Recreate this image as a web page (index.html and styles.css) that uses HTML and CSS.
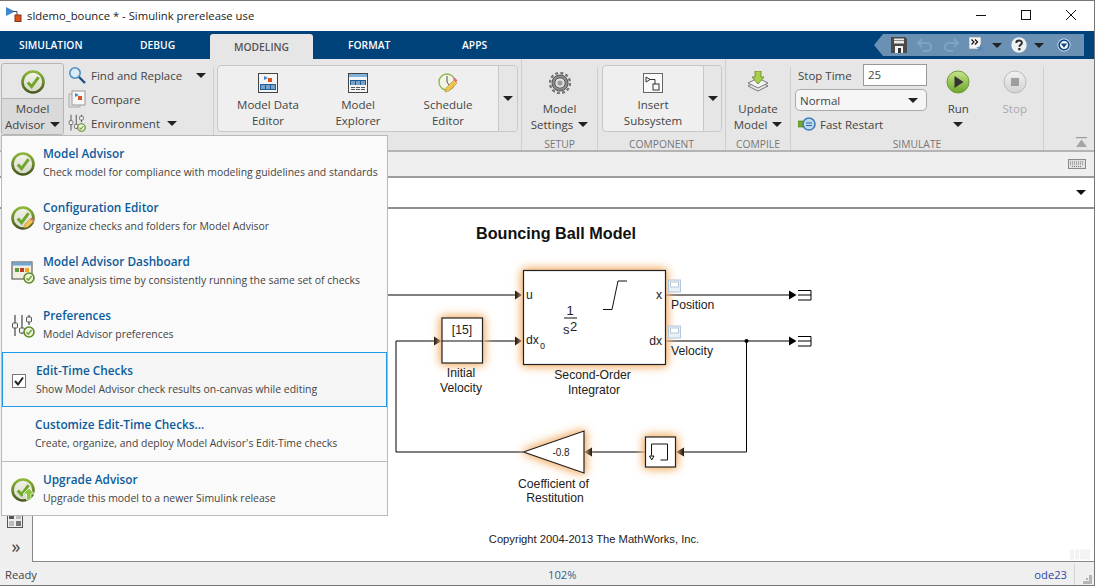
FILE: index.html
```html
<!DOCTYPE html>
<html lang="en">
<head>
<meta charset="utf-8">
<title>sldemo_bounce * - Simulink prerelease use</title>
<link rel="stylesheet" href="styles.css">
</head>
<body>
<svg class="defs" width="0" height="0" aria-hidden="true">
  <defs>
    <linearGradient id="ring" x1="0" y1="0" x2="0" y2="1"><stop offset="0" stop-color="#8db53a"/><stop offset="1" stop-color="#47591f"/></linearGradient>
    <linearGradient id="face" x1="0" y1="0" x2="0" y2="1"><stop offset="0" stop-color="#f4f4ea"/><stop offset="1" stop-color="#d5d9c8"/></linearGradient>
    <linearGradient id="runfill" x1="0" y1="0" x2="0" y2="1"><stop offset="0" stop-color="#c7e58a"/><stop offset="1" stop-color="#6ba52a"/></linearGradient>
    <linearGradient id="stopfill" x1="0" y1="0" x2="0" y2="1"><stop offset="0" stop-color="#f2f2f2"/><stop offset="1" stop-color="#d2d2d2"/></linearGradient>
    <symbol id="check" viewBox="0 0 24 24">
      <circle cx="12" cy="12" r="10.5" fill="url(#face)" stroke="url(#ring)" stroke-width="2.6"/>
      <path d="M6.800 12.400l3.800 4.200 7-9.400" fill="none" stroke="#6fa72c" stroke-width="3"/>
    </symbol>
    <symbol id="checkmini" viewBox="0 0 12 12">
      <circle cx="6" cy="6" r="5" fill="#eef2e2" stroke="#5f8a26" stroke-width="1.6"/>
      <path d="M3.400 6.200l1.900 2 3.300-4.200" fill="none" stroke="#6fa72c" stroke-width="1.5"/>
    </symbol>
    <symbol id="sliders" viewBox="0 0 24 24">
      <path d="M4 1v21M11 1v19M18 1v10" stroke="#555" stroke-width="1.3" fill="none"/>
      <rect x="1.500" y="9" width="5" height="5" rx="1" fill="#f2f2f2" stroke="#555"/>
      <rect x="8.500" y="14" width="5" height="5" rx="1" fill="#f2f2f2" stroke="#555"/>
      <rect x="15.500" y="3" width="5" height="5" rx="1" fill="#f2f2f2" stroke="#555"/>
      <use href="#checkmini" x="12" y="12" width="12" height="12"/>
    </symbol>
    <symbol id="pencil" viewBox="0 0 12 12">
      <path d="M1 11l1-4 6-6 3 3-6 6z" fill="#f2c24f" stroke="#b08a3a" stroke-width=".6"/>
      <path d="M7 2l3 3 1.400-1.500-3-3z" fill="#e0707a"/>
    </symbol>
  </defs>
</svg>
<div class="window">
  <header class="titlebar">
    <svg class="app-icon" viewBox="0 0 16 16"><path d="M0 0l9 4.500-9 4.500z" fill="#3f87c9"/><path d="M7 4.500h4v4" fill="none" stroke="#444"/><rect x="9" y="8" width="6" height="6.500" fill="#d9531e" stroke="#8a3512"/></svg>
    <span class="title-text">sldemo_bounce * - Simulink prerelease use</span>
    <div class="win-controls">
      <svg class="win-btn" viewBox="0 0 10 10"><path d="M0 5.500h10" stroke="#111"/></svg>
      <svg class="win-btn" viewBox="0 0 10 10"><rect x=".5" y=".5" width="9" height="9" fill="none" stroke="#111"/></svg>
      <svg class="win-btn" viewBox="0 0 10 10"><path d="M0 0l10 10M10 0L0 10" stroke="#111"/></svg>
    </div>
  </header>

  <nav class="tabbar">
    <span class="tab tab-sim">SIMULATION</span>
    <span class="tab tab-debug">DEBUG</span>
    <span class="tab tab-active">MODELING</span>
    <span class="tab tab-format">FORMAT</span>
    <span class="tab tab-apps">APPS</span>
    <div class="quick">
      <svg class="q-ico q-save" viewBox="0 0 16 16"><path d="M0 0h14l2 2v14H0z" fill="#4a4a4a"/><rect x="3" y="1.500" width="10" height="5" fill="#e8e8e8"/><rect x="3" y="3" width="10" height="1" fill="#8a8a8a"/><rect x="4" y="9" width="8" height="7" fill="#f4f4f4"/><rect x="7" y="11" width="3" height="5" fill="#333"/></svg>
      <svg class="q-ico q-undo" viewBox="0 0 16 16"><path d="M5 2L1 6l4 4M1 6h9a4 4 0 0 1 0 8H6" fill="none" stroke="#7fa3c4" stroke-width="2"/></svg>
      <svg class="q-ico q-redo" viewBox="0 0 16 16"><path d="M11 2l4 4-4 4M15 6H6a4 4 0 0 0 0 8h4" fill="none" stroke="#7fa3c4" stroke-width="2"/></svg>
      <svg class="q-ico q-fav" viewBox="0 0 16 16"><rect x="0" y="0" width="12" height="12" fill="#f3f3f3" stroke="#8a8a8a" stroke-width=".6"/><path d="M2.500 2.500l2.500 2.500-2.500 2.500M6 2.500l2.500 2.500-2.500 2.500" fill="none" stroke="#111" stroke-width="1.200"/><path d="M11.500 7l1.200 3h3l-2.400 2 1 3.200-2.800-1.800-2.800 1.800 1-3.200-2.400-2h3z" fill="#5b88b5"/></svg>
      <i class="arrow arrow-q1"></i>
      <svg class="q-ico q-help" viewBox="0 0 16 16"><circle cx="8" cy="8" r="7.700" fill="#eef1f4"/><path d="M5.300 6c0-3.400 5.600-3.400 5.600-.2 0 2-2.500 2-2.500 4" fill="none" stroke="#2f2f2f" stroke-width="2"/><rect x="7.200" y="11" width="2.300" height="2.300" fill="#2f2f2f"/></svg>
      <i class="arrow arrow-q2"></i>
      <svg class="q-ico q-min" viewBox="0 0 14 14"><circle cx="7" cy="7" r="6.500" fill="#f7f9fb"/><circle cx="7" cy="7" r="4.900" fill="none" stroke="#0d4a86" stroke-width="1.800"/><path d="M3.800 5.500h6.400L7 9.800z" fill="#0d4a86"/></svg>
    </div>
  </nav>

  <section class="ribbon">
    <div class="rg rg-file">
      <div class="advisor-btn">
        <div class="advisor-top"><svg class="i24"><use href="#check"/></svg></div>
        <div class="advisor-bottom"><span>Model</span><span>Advisor <i class="arrow arrow-inline"></i></span></div>
      </div>
      <ul class="small-list">
        <li><svg class="i18" viewBox="0 0 18 18"><circle cx="7" cy="7" r="5.200" fill="#dcebf7" stroke="#4f8fc4" stroke-width="1.600"/><path d="M11 11l6 6" stroke="#1c4f80" stroke-width="2.400"/></svg><span class="small-txt">Find and Replace</span><i class="arrow arrow-find"></i></li>
        <li><svg class="i18" viewBox="0 0 18 18"><rect x="1" y="4" width="11" height="13" fill="#e4e4e4" stroke="#aaa"/><rect x="4" y="1" width="13" height="14" fill="#f8f8f8" stroke="#999"/><path d="M7 3l4 2-4 2z" fill="#3f87c9"/><rect x="10" y="6" width="4" height="4" fill="#d9531e"/></svg><span class="small-txt">Compare</span></li>
        <li><svg class="i18" viewBox="0 0 24 24"><use href="#sliders"/></svg><span class="small-txt">Environment</span><i class="arrow arrow-env"></i></li>
      </ul>
    </div>

    <div class="rg rg-gallery">
      <div class="gallery gallery-model">
        <div class="gal-item gal-a">
          <svg class="i20" viewBox="0 0 20 20"><rect x=".5" y=".5" width="19" height="19" fill="#f5f5f5" stroke="#444"/><path d="M6 3l4 2-4 2z" fill="#3f87c9"/><rect x="10" y="5" width="4" height="4" fill="#d9531e"/><rect x="2" y="11" width="16" height="6" fill="#1d5f9a"/><path d="M3 13h14M3 15h14" stroke="#d8e6f2" stroke-dasharray="4 1"/></svg>
          <span>Model Data</span><span>Editor</span>
        </div>
        <div class="gal-item gal-b">
          <svg class="i20" viewBox="0 0 20 20"><rect x=".5" y=".5" width="19" height="19" fill="#f5f5f5" stroke="#444"/><rect x="1" y="1" width="18" height="3" fill="#7fb2dd"/><rect x="2" y="7" width="16" height="5" fill="#1d5f9a"/><path d="M3 9h14M3 11h14" stroke="#d8e6f2" stroke-dasharray="4 1"/><path d="M3 14.500h14M3 16.500h14" stroke="#555" stroke-dasharray="4 1"/></svg>
          <span>Model</span><span>Explorer</span>
        </div>
        <div class="gal-item gal-a">
          <svg class="i20" viewBox="0 0 20 20"><circle cx="9" cy="9" r="8" fill="#f2f5e6" stroke="#8fb74d" stroke-width="1.400"/><path d="M9 3v6l2 3" fill="none" stroke="#555"/><path d="M7 19l1-4 8-8 3 3-8 8z" fill="#f2c24f" stroke="#b08a3a" stroke-width=".6"/><path d="M15 6l3 3 1.500-1.500-3-3z" fill="#e0707a"/></svg>
          <span>Schedule</span><span>Editor</span>
        </div>
        <div class="gal-drop"><i class="arrow"></i></div>
      </div>
    </div>

    <div class="rg rg-setup">
      <div class="big-btn">
        <svg class="i22" viewBox="0 0 22 22"><circle cx="11" cy="11" r="8" fill="#8d8d8d" stroke="#555" stroke-width="1"/><circle cx="11" cy="11" r="10" fill="none" stroke="#777" stroke-width="2.400" stroke-dasharray="3 2.240"/><circle cx="11" cy="11" r="5.200" fill="#e0e0e0" stroke="#555"/><circle cx="11" cy="11" r="2.600" fill="#9a9a9a"/></svg>
        <span>Model</span><span>Settings <i class="arrow arrow-inline"></i></span>
      </div>
      <div class="rg-label">SETUP</div>
    </div>

    <div class="rg rg-component">
      <div class="gallery gallery-comp">
        <div class="gal-item gal-comp">
          <svg class="i20" viewBox="0 0 20 20"><rect x=".5" y=".5" width="19" height="19" fill="#fafafa" stroke="#666"/><path d="M3 4l4 2.500L3 9zM7 6.500h5V11" fill="none" stroke="#333"/><rect x="10" y="11" width="6" height="6" fill="none" stroke="#333"/></svg>
          <span>Insert</span><span>Subsystem</span>
        </div>
        <div class="gal-drop"><i class="arrow"></i></div>
      </div>
      <div class="rg-label">COMPONENT</div>
    </div>

    <div class="rg rg-compile">
      <div class="big-btn big-update">
        <svg class="i22" viewBox="0 0 22 22"><path d="M1 15l10-5 10 5-10 5z" fill="#e8e8e8" stroke="#777"/><path d="M1 12l10-5 10 5-10 5z" fill="#f3f3f3" stroke="#777"/><path d="M8 0h6v6h3l-6 7-6-7h3z" fill="#a9cf4f" stroke="#5d8220" stroke-width=".8"/></svg>
        <span>Update</span><span>Model <i class="arrow arrow-inline"></i></span>
      </div>
      <div class="rg-label">COMPILE</div>
    </div>

    <div class="rg rg-simulate">
      <div class="sim-body">
        <div class="sim-left">
          <div class="sim-row"><span class="stop-label">Stop Time</span><span class="stop-input">25</span></div>
          <div class="sim-select"><span>Normal</span><i class="arrow"></i></div>
          <div class="sim-fast">
            <svg class="i18" viewBox="0 0 18 18"><rect x="0" y="6" width="5" height="6" fill="#76a82c" stroke="#4c7a18" stroke-width=".6"/><circle cx="11" cy="9" r="6" fill="#bcd8ef" stroke="#3f7eb8" stroke-width="1.600"/><path d="M8 8h6M8 10.500h6" stroke="#2f6ca5"/></svg>
            <span>Fast Restart</span>
          </div>
        </div>
        <div class="sim-action sim-run">
          <svg class="i24" viewBox="0 0 24 24"><circle cx="12" cy="12" r="11" fill="url(#runfill)" stroke="#6f9a3a"/><path d="M8.500 6l9 6-9 6z" fill="#333"/></svg>
          <span>Run</span><i class="arrow arrow-run"></i>
        </div>
        <div class="sim-action sim-stop">
          <svg class="i24" viewBox="0 0 24 24"><circle cx="12" cy="12" r="11" fill="url(#stopfill)" stroke="#bbb"/><rect x="8" y="8" width="8" height="8" fill="#9e9e9e"/></svg>
          <span>Stop</span>
        </div>
      </div>
      <div class="rg-label">SIMULATE</div>
    </div>

    <div class="ribbon-end">
      <svg class="collapse" viewBox="0 0 11 11"><path d="M0 .5h11" stroke="#9a9a9a" stroke-width="1.400"/><path d="M5.500 2.500L11 10H0z" fill="#a5a5a5"/></svg>
    </div>
  </section>

  <div class="toolstrip">
    <svg class="keyboard" viewBox="0 0 18 10"><rect x=".5" y=".5" width="17" height="9" fill="#e0e0e0" stroke="#8a8a8a"/><path d="M2 3h14M2 5h14M4 7.500h10" stroke="#777" stroke-dasharray="1 1"/></svg>
  </div>
  <div class="address"><i class="arrow arrow-addr"></i></div>

  <main class="workspace">
    <aside class="palette">
      <svg class="pal-ico" viewBox="0 0 16 16"><rect x=".5" y=".5" width="15" height="15" fill="#eee" stroke="#555"/><rect x="2" y="2" width="5" height="5" fill="#555"/><rect x="9" y="2" width="5" height="5" fill="#bbb"/><rect x="2" y="9" width="5" height="5" fill="#bbb"/><rect x="9" y="9" width="5" height="5" fill="#777"/></svg>
      <span class="pal-more">»</span>
    </aside>
    <div class="canvas">
      <svg class="diagram" viewBox="33 210 1061 351">
        <text class="d-title" x="556" y="239">Bouncing Ball Model</text>

        <g class="wires">
          <path d="M388 295.500H516M665 295.500H790M665 341.500H790M482 341.500H516M746.500 341.500V452.500H684M645 452.500H592M523 452.500H396V341.500H435"/>
          <path class="term" d="M798 291H811V300.500H798M798 295.500H811M798 337H811V346.500H798M798 341.500H811"/>
        </g>
        <g class="arrows">
          <path d="M515 291l7 4.500-7 4.500zM515 337l7 4.500-7 4.500zM789 291l7.500 4.500-7.500 4.500zM789 337l7.500 4.500-7.500 4.500zM434 337l7.500 4.500-7.500 4.500zM684 448l-8 4.500 8 4.500zM592 448l-8 4.500 8 4.500z"/>
          <circle cx="746.500" cy="341.500" r="2"/>
        </g>

        <rect class="block" x="523.500" y="271" width="142" height="94"/>
        <text class="d-txt" x="526" y="299">u</text>
        <text class="d-txt" x="526" y="344">dx</text>
        <text class="d-sub" x="540" y="349">0</text>
        <text class="d-txt d-end" x="662" y="299">x</text>
        <text class="d-txt d-end" x="662" y="345">dx</text>
        <text class="d-big d-mid" x="570" y="315">1</text>
        <path class="thin" d="M564 318.500H577"/>
        <text class="d-big" x="563" y="334">s</text>
        <text class="d-big" x="570" y="331">2</text>
        <path class="thin" d="M603 310H612L618 281.500H627"/>

        <rect class="logmark" x="668.500" y="280.500" width="12" height="12"/>
        <rect class="logmark-in" x="670.500" y="282.500" width="8" height="5"/>
        <rect class="logmark" x="668.500" y="326.500" width="12" height="12"/>
        <rect class="logmark-in" x="670.500" y="328.500" width="8" height="5"/>
        <text class="d-txt" x="671" y="309">Position</text>
        <text class="d-txt" x="671" y="355">Velocity</text>

        <rect class="block" x="442" y="318.500" width="40.500" height="45"/>
        <path class="thin" d="M442 341.500H482"/>
        <text class="d-txt d-mid" x="462" y="334">[15]</text>
        <text class="d-txt d-mid" x="461" y="377">Initial</text>
        <text class="d-txt d-mid" x="461" y="392">Velocity</text>
        <text class="d-txt d-mid" x="592.500" y="379">Second-Order</text>
        <text class="d-txt d-mid" x="594" y="394">Integrator</text>

        <rect class="block" x="645.500" y="437.500" width="30" height="30"/>
        <path class="thin" d="M660.500 460.500H667.500V444.500H651.500V456"/>
        <path class="thin hollow" d="M649.500 456.500h4.500l-2.250 4z"/>

        <path class="block" d="M523.500 452.500L584 431.500V473.500Z"/>
        <text class="d-small d-mid" x="561" y="456">-0.8</text>
        <text class="d-txt d-mid" x="553.500" y="488">Coefficient of</text>
        <text class="d-txt d-mid" x="555" y="502">Restitution</text>
        <text class="d-copy d-mid" x="594" y="543">Copyright 2004-2013 The MathWorks, Inc.</text>

        <rect class="ghost" x="1070" y="550" width="4" height="10"/>
        <rect class="ghost" x="1075" y="550" width="4" height="10"/>
        <rect class="ghost" x="1080" y="550" width="10" height="10"/>
      </svg>
    </div>
  </main>

  <footer class="status">
    <span class="st-ready">Ready</span>
    <span class="st-zoom">102%</span>
    <span class="st-solver">ode23</span>
    <span class="st-grip">
      <svg class="grip" viewBox="0 0 9 9"><path d="M6 0h3v3H6zM3 3h2v2H3zM6 3h3v3H6zM0 6h3v3H0zM3 6h3v3H3zM6 6h3v3H6z" fill="#b5b5b5"/></svg>
    </span>
  </footer>

  <div class="popup">
    <div class="pop-item">
      <svg class="i24 pop-ico"><use href="#check"/></svg>
      <div><h3>Model Advisor</h3><p>Check model for compliance with modeling guidelines and standards</p></div>
    </div>
    <div class="pop-item">
      <svg class="i24 pop-ico" viewBox="0 0 24 24"><use href="#check"/><use href="#pencil" x="12" y="11" width="12" height="12"/></svg>
      <div><h3>Configuration Editor</h3><p>Organize checks and folders for Model Advisor</p></div>
    </div>
    <div class="pop-item">
      <svg class="i24 pop-ico" viewBox="0 0 24 24"><rect x="1" y="2" width="20" height="17" fill="#f2efe0" stroke="#444"/><rect x="1.500" y="2.500" width="19" height="3" fill="#6fa6d6"/><rect x="4" y="8" width="4" height="4" fill="#5f9a3c"/><rect x="9" y="8" width="4" height="4" fill="#c0392b"/><rect x="14" y="8" width="4" height="4" fill="#f0a81e"/><use href="#checkmini" x="12" y="12" width="12" height="12"/></svg>
      <div><h3>Model Advisor Dashboard</h3><p>Save analysis time by consistently running the same set of checks</p></div>
    </div>
    <div class="pop-item">
      <svg class="i24 pop-ico" viewBox="0 0 24 24"><use href="#sliders"/></svg>
      <div><h3>Preferences</h3><p>Model Advisor preferences</p></div>
    </div>
    <div class="pop-item pop-selected">
      <span class="pop-check"><svg viewBox="0 0 12 12"><path d="M2 6l3 3.500L10 2.500" fill="none" stroke="#222" stroke-width="2"/></svg></span>
      <div><h3>Edit-Time Checks</h3><p>Show Model Advisor check results on-canvas while editing</p></div>
    </div>
    <div class="pop-item pop-custom">
      <div><h3>Customize Edit-Time Checks...</h3><p>Create, organize, and deploy Model Advisor's Edit-Time checks</p></div>
    </div>
    <div class="pop-item">
      <svg class="i24 pop-ico" viewBox="0 0 24 24"><use href="#check"/><path d="M18 10l5.500 6H20v6h-4.500v-6H12z" fill="#8cc63f" stroke="#fff" stroke-width=".7"/></svg>
      <div><h3>Upgrade Advisor</h3><p>Upgrade this model to a newer Simulink release</p></div>
    </div>
  </div>
</div>
</body>
</html>
```
FILE: styles.css
```css
* { box-sizing: border-box; }
html, body { margin: 0; padding: 0; background: #fff; }
body { font-family: "Open Sans", "Noto Sans", "Liberation Sans", sans-serif; font-size: 11.500px; color: #444; overflow: hidden; }
.defs { position: absolute; }
.window { position: relative; width: 1095px; height: 586px; border-top: 1px solid #777; border-right: 1px solid #777; border-bottom: 1px solid #777; display: flex; flex-direction: column; overflow: hidden; }
i { font-style: normal; }
svg { display: block; flex: none; }
.i18 { width: 18px; height: 18px; }
.i20 { width: 20px; height: 20px; }
.i22 { width: 22px; height: 22px; }
.i24 { width: 24px; height: 24px; }

.arrow { display: inline-block; width: 0; height: 0; border-left: 5px solid transparent; border-right: 5px solid transparent; border-top: 5px solid #222; }

/* Title bar */
.titlebar { height: 30px; flex: none; background: #fff; display: flex; align-items: center; padding-left: 6px; }
.app-icon { width: 16px; height: 16px; margin-top: -2px; }
.title-text { margin-left: 5px; font-size: 11.300px; color: #222; margin-top: -2px; white-space: nowrap; }
.win-controls { margin-left: auto; display: flex; gap: 35px; padding-right: 18px; margin-top: -2px; }
.win-btn { width: 10px; height: 10px; }

/* Tabs */
.tabbar { height: 28px; flex: none; background: #00427a; display: flex; align-items: stretch; }
.tab { font-size: 10.300px; font-weight: 600; color: #fff; display: flex; align-items: center; margin-top: 3px; padding-bottom: 3px; white-space: nowrap; }
.tab-sim { width: 105px; padding-left: 19px; }
.tab-debug { width: 105px; padding-left: 35px; }
.tab-active { width: 103px; justify-content: center; background: #e6e6e6; color: #555; border-radius: 3px 3px 0 0; padding-bottom: 0; }
.tab-format { width: 112px; padding-left: 35px; }
.tab-apps { padding-left: 37px; }
.quick { margin-left: auto; margin-right: 10px; margin-top: 3px; margin-bottom: 3px; width: 210px; background: #6a90b4; clip-path: polygon(0 50%, 9px 0, 100% 0, 100% 100%, 9px 100%); display: flex; align-items: center; }
.q-ico { width: 16px; height: 16px; }
.q-save { margin-left: 17px; }
.q-undo { margin-left: 10px; }
.q-redo { margin-left: 10px; }
.q-fav { margin-left: 10px; }
.arrow-q1 { margin-left: 7px; }
.q-help { margin-left: 9px; }
.arrow-q2 { margin-left: 7px; }
.q-min { width: 14px; height: 14px; margin-left: 13px; }

/* Ribbon */
.ribbon { height: 93px; flex: none; background: #e6e6e6; border-bottom: 2px solid #b4b4b4; display: flex; }
.rg { display: flex; flex-direction: column; position: relative; border-right: 1px solid #cfcfcf; margin-top: 8px; }
.rg-label { position: absolute; left: 0; right: 0; top: 70px; text-align: center; font-size: 10.300px; color: #777; line-height: 14px; }
.rg-file { width: 214px; flex-direction: row; margin-top: 0; padding: 4px 0 0 1px; border-right: 0; }
.rg-file::after { content: ""; position: absolute; right: 0; top: 8px; bottom: 0; width: 1px; background: #cfcfcf; }
.advisor-btn { width: 63px; height: 72px; border: 1px solid #b5b5b5; border-radius: 3px; overflow: hidden; display: flex; flex-direction: column; }
.advisor-top { height: 34px; display: flex; align-items: center; justify-content: center; padding-top: 2px; }
.advisor-bottom { flex: 1; background: #dadada; border-top: 1px solid #b5b5b5; display: flex; flex-direction: column; align-items: center; line-height: 16px; padding-top: 2px; white-space: nowrap; }
.arrow-inline { margin-left: 2px; vertical-align: 2px; }
.small-list { list-style: none; margin: 0; padding: 0 0 0 4px; flex: 1; }
.small-list li { height: 24px; display: flex; align-items: center; white-space: nowrap; }
.small-txt { margin-left: 5px; }
.arrow-find { margin-left: 14px; }
.arrow-env { margin-left: 7px; }

.rg-gallery { width: 308px; padding-left: 3px; margin-top: 0; padding-top: 6px; }
.gallery { height: 67px; background: #efefef; border: 1px solid #c8c8c8; border-radius: 4px; display: flex; }
.gallery-model { width: 301px; }
.gal-item { flex: none; display: flex; flex-direction: column; align-items: center; line-height: 16px; padding-top: 7px; white-space: nowrap; }
.gal-item svg { margin-bottom: 4px; }
.gal-a { width: 100px; }
.gal-b { width: 80px; }
.gal-comp { width: 100px; }
.gal-drop { flex: 1; background: #e6e6e6; border-left: 1px solid #c8c8c8; display: flex; align-items: center; justify-content: center; border-radius: 0 4px 4px 0; }

.rg-setup { width: 76px; }
.big-btn { display: flex; flex-direction: column; align-items: center; line-height: 16px; padding-top: 5px; white-space: nowrap; }
.big-btn svg { margin-bottom: 7px; }
.big-update { padding-top: 4px; }
.big-update svg { margin-bottom: 8px; }
.rg-component { width: 128px; padding: 0 4px; margin-top: 0; padding-top: 6px; }
.rg-component .rg-label { top: 78px; }
.gallery-comp { width: 120px; }
.rg-compile { width: 65px; }
.rg-simulate { width: 253px; }
.sim-body { display: flex; padding-left: 4px; margin-top: -3px; }
.sim-left { width: 132px; }
.sim-row { height: 22px; display: flex; align-items: center; padding-left: 3px; white-space: nowrap; }
.stop-label { width: 65px; }
.stop-input { width: 64px; height: 22px; background: #fff; border: 1px solid #999; padding-left: 4px; line-height: 20px; }
.sim-select { height: 22px; margin-top: 3px; background: #f5f5f5; border: 1px solid #aaa; border-radius: 5px; display: flex; align-items: center; justify-content: space-between; padding: 0 8px 0 4px; }
.sim-fast { height: 22px; margin-top: 2px; display: flex; align-items: center; padding-left: 3px; white-space: nowrap; }
.sim-fast span { margin-left: 4px; }
.sim-action { display: flex; flex-direction: column; align-items: center; line-height: 16px; padding-top: 6px; width: 57px; }
.sim-action svg { margin-bottom: 7px; }
.sim-run { margin-left: 3px; }
.sim-stop { color: #aaa; }
.arrow-run { margin-top: 5px; }
.ribbon-end { flex: 1; position: relative; }
.collapse { position: absolute; right: 7px; top: 78px; width: 11px; height: 11px; }

/* Toolstrip and address */
.toolstrip { height: 26px; flex: none; background: #efefef; border-bottom: 2px solid #9c9c9c; display: flex; align-items: center; justify-content: flex-end; padding-right: 8px; }
.keyboard { width: 18px; height: 10px; }
.address { height: 31px; flex: none; background: #fff; border-bottom: 2px solid #8e8e8e; display: flex; align-items: center; justify-content: flex-end; padding: 0 8px 0 0; }
.arrow-addr { border-top-color: #111; }

/* Workspace */
.workspace { flex: 1; display: flex; min-height: 0; }
.palette { width: 33px; flex: none; background: #efefef; border-right: 1px solid #888; display: flex; flex-direction: column; align-items: center; justify-content: flex-end; padding-bottom: 7px; }
.pal-ico { width: 16px; height: 16px; margin-bottom: 9px; margin-right: 2px; }
.pal-more { font-size: 18px; line-height: 18px; color: #444; }
.canvas { flex: 1; background: #fff; border-bottom: 1px solid #888; }
.diagram { width: 100%; height: 100%; font-family: "Liberation Sans", Arial, sans-serif; }
.d-title { font-size: 16.200px; font-weight: 700; fill: #111; text-anchor: middle; }
.d-txt { font-size: 12.200px; fill: #222; }
.d-copy { font-size: 11.200px; fill: #222; }
.d-small { font-size: 10px; fill: #222; }
.d-sub { font-size: 9px; fill: #222; }
.d-big { font-size: 13px; fill: #222; }
.d-mid { text-anchor: middle; }
.d-end { text-anchor: end; }
.wires path { fill: none; stroke: #000; stroke-width: 1; }
.arrows { fill: #000; }
.block { fill: #fff; stroke: #222; stroke-width: 1.200; filter: drop-shadow(0 0 4px #f2ad66) drop-shadow(0 0 4px #f7cb9c); }
.thin { fill: none; stroke: #111; stroke-width: 1; }
.hollow { fill: #fff; }
.logmark { fill: #e8eff6; stroke: #b5c8da; }
.logmark-in { fill: #fff; stroke: #b5c8da; }
.ghost { fill: #f3f3f3; }

/* Status */
.status { height: 23px; flex: none; background: #efefef; display: flex; align-items: center; position: relative; font-size: 11.200px; padding: 2px 0 0 5px; }
.st-zoom { position: absolute; left: 548px; color: #3b5b80; }
.st-solver { margin-left: auto; margin-right: 7px; color: #2c46a8; }
.st-grip { width: 20px; height: 21px; border-left: 1px solid #d4d4d4; display: flex; justify-content: flex-end; align-items: flex-end; padding: 0 2px 1px 0; }
.grip { width: 9px; height: 9px; }

/* Popup */
.popup { position: absolute; left: 1px; top: 134px; width: 387px; height: 381px; background: #fafafa; border: 1px solid #b9b9b9; }
.pop-item { height: 54px; display: flex; align-items: center; padding: 0 0 1px 9px; white-space: nowrap; }
.pop-ico { margin-right: 8px; margin-top: 3px; }
.pop-item h3 { margin: 0; font-size: 11.800px; font-weight: 600; color: #0c5c9c; line-height: 16px; }
.pop-item p { margin: 4px 0 0; font-size: 10.450px; color: #444; line-height: 15px; }
.pop-selected { height: 55px; border: 1px solid #1e9be8; background: #f5f5f5; }
.pop-check { width: 14px; height: 14px; border: 1px solid #777; background: #fff; margin-right: 10px; margin-top: 3px; }
.pop-check svg { width: 12px; height: 12px; }
.pop-custom { padding-left: 33px; border-bottom: 1px solid #bbb; height: 55px; }
```
